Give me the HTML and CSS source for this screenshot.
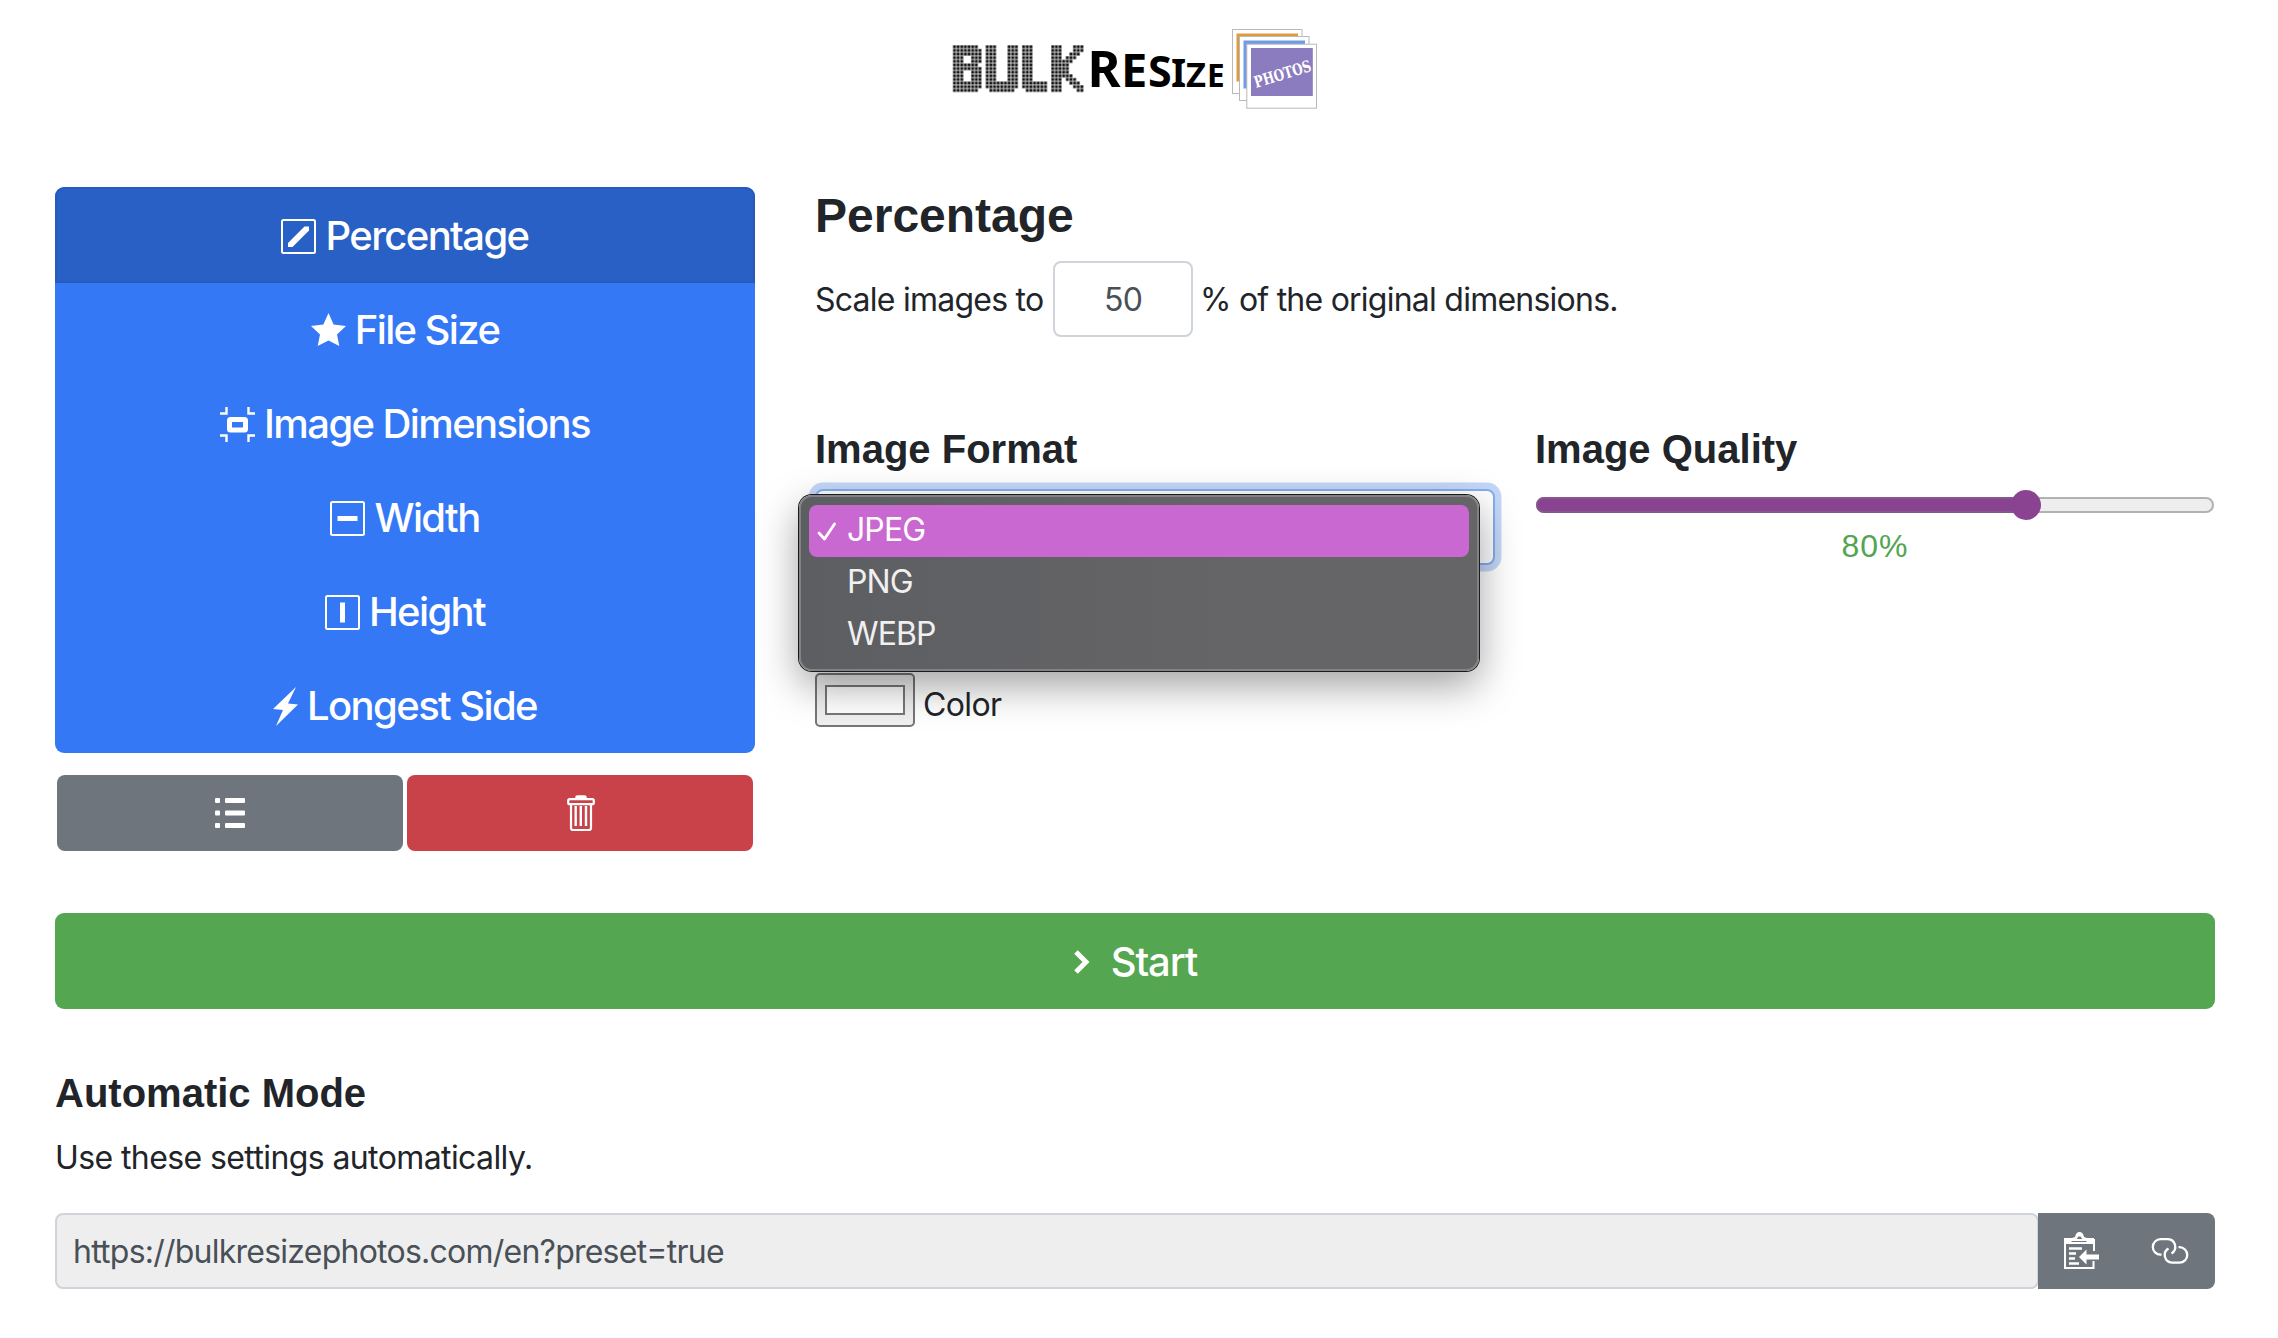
FILE: index.html
```html
<!DOCTYPE html>
<html lang="en">
<head>
<meta charset="utf-8">
<title>Bulk Resize Photos</title>
<link rel="stylesheet" href="styles.css">
</head>
<body>
<div class="container">
  <header class="header">
    <svg class="logo" width="368" height="84" viewBox="950 26 368 84" role="img" aria-label="Bulk Resize Photos">
      <defs>
        <pattern id="dots" width="1" height="1" patternUnits="userSpaceOnUse">
          <rect width="1" height="1" fill="#d2d2d2"/>
          <rect x=".12" y=".12" width=".74" height=".74" fill="#111"/>
        </pattern>
      </defs>
      <g transform="translate(952.700 45) scale(3.640 3.630)" fill="url(#dots)" fill-rule="evenodd">
        <path d="M0 0H7V1H8V5H7V6H8V12H7V13H0ZM3 3V5H5V3ZM3 7V10H5V7Z"/>
        <path d="M9 0H12V10H15V0H18V12H17V13H10V12H9Z"/>
        <path d="M19 0H22V10H26V13H20V12H19Z"/>
        <path d="M27 0H30V4H31V3H32V2H33V0H36V2H35V3H34V4H33V5H32V8H33V9H34V10H35V11H36V13H34V12H33V11H32V10H31V9H30V13H27Z"/>
      </g>
      <g class="logo-word">
        <text x="1087.500" y="87.300" font-size="50.500">R</text>
        <text x="1121" y="87.300" font-size="47">E</text>
        <text x="1148" y="87.300" font-size="43">S</text>
        <text x="1171" y="87.300" font-size="39">I</text>
        <text x="1186" y="87.300" font-size="34.500">Z</text>
        <text x="1207" y="87.300" font-size="31.500">E</text>
      </g>
      <g fill="#fff" stroke="#b9b9b9">
        <rect x="1232.500" y="29.500" width="69.500" height="64"/>
        <rect x="1236.500" y="33.500" width="61.500" height="48" fill="#e09b3d" stroke="none"/>
        <rect x="1239.500" y="36.500" width="69.500" height="64"/>
        <rect x="1243.500" y="40.500" width="61.500" height="48" fill="#6f9ce6" stroke="none"/>
        <rect x="1246.800" y="44.200" width="69.700" height="64"/>
        <rect x="1251" y="48" width="61.800" height="48" fill="#8b7cc0" stroke="none"/>
      </g>
      <text class="logo-photos" transform="translate(1256 88) rotate(-17)" textLength="59" lengthAdjust="spacingAndGlyphs">PHOTOS</text>
    </svg>
  </header>

  <main class="settings">
    <aside class="sidebar">
      <nav class="modes">
        <a class="mode active"><svg class="icon" viewBox="0 0 35 35"><rect x="1" y="1" width="33" height="33" rx="1.500" fill="none" stroke="currentColor" stroke-width="2"/><path d="M7 24 23.500 7.500H28V11.500L11.500 28H7Z"/></svg><span>Percentage</span></a>
        <a class="mode"><svg class="icon" viewBox="0 0 35 35"><path d="M17.500 0 22.600 11.500 35 13 26 21.500 28.300 33 17.500 27.500 6.700 33 9 21.500 0 13 12.400 11.500Z"/></svg><span>File Size</span></a>
        <a class="mode"><svg class="icon" viewBox="0 0 35 35"><path d="M0 6.500H6.500V0M28.500 0V6.500H35M35 28.500H28.500V35M6.500 35V28.500H0" fill="none" stroke="currentColor" stroke-width="2.400"/><rect x="9.500" y="12.500" width="16" height="10.500" rx="1" fill="none" stroke="currentColor" stroke-width="5"/></svg><span>Image Dimensions</span></a>
        <a class="mode"><svg class="icon" viewBox="0 0 35 35"><rect x="1" y="1" width="33" height="33" rx="1.500" fill="none" stroke="currentColor" stroke-width="2"/><path d="M7.500 15H27.500V20H7.500Z"/></svg><span>Width</span></a>
        <a class="mode"><svg class="icon" viewBox="0 0 35 35"><rect x="1" y="1" width="33" height="33" rx="1.500" fill="none" stroke="currentColor" stroke-width="2"/><path d="M15 7.500H20V27.500H15Z"/></svg><span>Height</span></a>
        <a class="mode"><svg class="icon bolt" viewBox="0 0 25 39"><path d="M23 0 0 22 10 23 3 39 25 17.500 15 16.500Z"/></svg><span>Longest Side</span></a>
      </nav>
      <div class="actions">
        <button class="btn gray" aria-label="List"><svg width="30" height="30" viewBox="0 0 30 30"><g fill="currentColor"><rect width="5" height="5" rx="1"/><rect x="10" width="20" height="5" rx="1"/><rect y="12.500" width="5" height="5" rx="1"/><rect x="10" y="12.500" width="20" height="5" rx="1"/><rect y="25" width="5" height="5" rx="1"/><rect x="10" y="25" width="20" height="5" rx="1"/></g></svg></button>
        <button class="btn red" aria-label="Delete"><svg width="28" height="36" viewBox="0 0 28 36" fill="none" stroke="currentColor"><path d="M9 3.500V2Q9 1 10.500 1H17.500Q19 1 19 2V3.500" fill="currentColor" stroke-width="1.500"/><rect x="1.200" y="4.200" width="25.600" height="5" rx="1.500" stroke-width="2.200"/><path d="M4 9V33Q4 35 6 35H22Q24 35 24 33V9" stroke-width="2.200"/><path d="M8.700 11V31M13.800 11V31M19 11V31" stroke-width="2.400"/></svg></button>
      </div>
    </aside>

    <section class="panel">
      <h1>Percentage</h1>
      <div class="scale">
        <span class="scale-before">Scale images to</span>
        <input class="field percent" value="50">
        <span class="scale-after">% of the original dimensions.</span>
      </div>
      <div class="columns">
        <div>
          <h2>Image Format</h2>
          <div class="select">
            <ul class="menu">
              <li class="selected"><svg class="check" viewBox="0 0 20 20"><path d="M2 11 7.500 17 17.500 2" fill="none" stroke="currentColor" stroke-width="2.800" stroke-linecap="round" stroke-linejoin="round"/></svg>JPEG</li>
              <li>PNG</li>
              <li>WEBP</li>
            </ul>
          </div>
          <div class="color"><span class="swatch"><span></span></span><label>Color</label></div>
        </div>
        <div>
          <h2>Image Quality</h2>
          <div class="slider"><div class="fill"></div><div class="thumb"></div></div>
          <div class="quality">80%</div>
        </div>
      </div>
    </section>
  </main>

  <button class="start"><svg width="18" height="24" viewBox="0 0 18 24"><path d="M3 2 13 12 3 22" fill="none" stroke="currentColor" stroke-width="5"/></svg><span>Start</span></button>

  <section class="automatic">
    <h2>Automatic Mode</h2>
    <p>Use these settings automatically.</p>
    <div class="url-row">
      <input class="field url" value="https://bulkresizephotos.com/en?preset=true" readonly>
      <div class="url-actions">
        <svg width="36" height="38" viewBox="0 0 36 38"><path d="M30 19V8H1V36H29.500V29" fill="none" stroke="currentColor" stroke-width="2"/><path d="M0 12V6H8L11 5Q12 0 15.500 0T20 5L23 6H30V12ZM7 10H23L21 8H19L16.500 4.500H14.500L12 8H9Z" fill="currentColor" fill-rule="evenodd"/><path d="M5 16.500H18M5 21.500H12M5 26.500H11M5 31.500H15" stroke="currentColor" stroke-width="2.600"/><path d="M15 25 22.500 17.500V22.500H35V27.500H22.500V32.500Z" fill="currentColor"/></svg>
        <svg width="38" height="26" viewBox="0 0 38 26" fill="none" stroke="currentColor" stroke-width="2.300"><path d="M10.500 16.600H9.500A7.700 7.700 0 0 1 9.500 1.200H17A7.700 7.700 0 0 1 20.500 15.500"/><path d="M27.500 9.200H28.500A7.700 7.700 0 0 1 28.500 24.700H21A7.700 7.700 0 0 1 17.500 10.400"/></svg>
      </div>
    </div>
  </section>
</div>
</body>
</html>
```
FILE: styles.css
```css
* { box-sizing: border-box; }

body {
  margin: 0;
  background: #fff;
  color: #212529;
  font: 32px/48px Inter, "Liberation Sans", sans-serif;
  letter-spacing: -0.76px;
}

.container { padding: 0 63px 0 55px; }

h1, h2, p, ul { margin: 0; }

h1, h2 {
  font-family: "Liberation Sans", Arial, sans-serif;
  font-weight: 700;
  letter-spacing: 0;
}
h1 { font-size: 48px; line-height: 58px; }
h2 { font-size: 40px; line-height: 48px; }

button { border: 0; color: #fff; font: inherit; }
button svg, .url-actions svg { display: block; }

/* header */
.header {
  height: 187px;
  padding-top: 26px;
}
.logo { display: block; margin-left: 895px; overflow: visible; }
.logo-word { font-family: "Noto Sans", sans-serif; font-weight: 700; fill: #000; letter-spacing: 0; }
.logo-photos { font: 700 16px "DejaVu Serif", serif; fill: #fff; letter-spacing: 0; }

/* resize modes */
.settings {
  display: grid;
  grid-template-columns: 700px 1400px;
  column-gap: 60px;
}
.modes {
  background: #3478f6;
  border-radius: 9px;
  overflow: hidden;
}
.mode {
  display: flex;
  align-items: center;
  justify-content: center;
  gap: 9px;
  height: 94px;
  color: #fff;
  font-size: 40px;
  font-weight: 450;
  letter-spacing: -1.6px;
}
.mode.active {
  height: 96px;
  padding-top: 2px;
  background: #2960c5;
  border: 2px solid #285bb8;
  border-radius: 9px 9px 0 0;
}
.icon { width: 35px; height: 35px; fill: currentColor; }
.icon.bolt { width: 25px; height: 39px; }

.actions {
  display: grid;
  grid-template-columns: 1fr 1fr;
  gap: 4px;
  padding: 22px 2px 0;
}
.btn {
  display: flex;
  align-items: center;
  justify-content: center;
  height: 76px;
  padding: 0;
  border-radius: 8px;
}
.gray { background: #6e757c; }
.red { padding-left: 2px; background: #ca4249; }

/* settings panel */
.scale {
  display: flex;
  align-items: center;
  margin-top: 16px;
}
.field {
  height: 76px;
  border: 2px solid #ced4da;
  border-radius: 8px;
  color: #495057;
  font: inherit;
  letter-spacing: inherit;
  outline: 0;
}
.scale span { padding-top: 2px; }
.scale-before { width: 238px; white-space: nowrap; }
.percent { width: 140px; padding: 0; text-align: center; }
.scale-after { margin-left: 7px; }

.columns {
  display: grid;
  grid-template-columns: 680px 680px;
  column-gap: 40px;
  margin-top: 88px;
}
.select {
  position: relative;
  height: 76px;
  margin-top: 16px;
  border: 2px solid #80b0ee;
  border-radius: 8px;
  background: #fff;
  box-shadow: 0 0 0 6.4px #c5d7f8;
}
.menu {
  position: absolute;
  z-index: 2;
  left: -18px;
  top: 4px;
  width: 680px;
  height: 176px;
  padding: 8px 8px 0;
  list-style: none;
  color: #f0f0f0;
  background: linear-gradient(90deg, #5d5e62, #656567 65%);
  border: 2px solid #828284;
  border-radius: 13px;
  box-shadow: 0 0 0 1px #1b1b1b, 0 14px 40px rgba(0, 0, 0, .38);
}
.menu li {
  position: relative;
  height: 52px;
  padding-left: 38px;
  line-height: 50px;
  letter-spacing: -0.9px;
}
.menu .selected {
  color: #fff;
  background: #ca68d1;
  border-radius: 8px;
}
.check { position: absolute; left: 8px; top: 17px; width: 20px; height: 20px; }

.color {
  display: flex;
  gap: 8px;
  margin-top: 108px;
}
.swatch {
  width: 100px;
  height: 54px;
  padding: 10px 8px;
  border: 2px solid #767676;
  border-radius: 5px;
  background: #efefef;
}
.swatch span {
  display: block;
  height: 30px;
  border: 2px solid #777;
  background: #fff;
}
.color label { padding-top: 8px; letter-spacing: -0.6px; }

.slider {
  position: relative;
  width: 678px;
  height: 16px;
  margin: 24px 1px 9px;
  border: 2px solid #b2b2b2;
  border-radius: 8px;
  background: #eee;
}
.fill {
  width: 490px;
  height: 16px;
  margin: -2px;
  border: 2px solid #83588a;
  border-radius: 8px 0 0 8px;
  background: #8a4391;
}
.thumb {
  position: absolute;
  left: 473px;
  top: -9px;
  width: 30px;
  height: 30px;
  border-radius: 50%;
  background: #8a4391;
}
.quality {
  color: #53a551;
  font-family: "Liberation Sans", Arial, sans-serif;
  letter-spacing: 1px;
  text-align: center;
}

/* start */
.start {
  display: flex;
  align-items: center;
  justify-content: center;
  gap: 20px;
  width: 100%;
  height: 96px;
  margin-top: 62px;
  padding: 2px 0 0;
  border-radius: 9px;
  background: #54a651;
  font-size: 40px;
  font-weight: 450;
  letter-spacing: -1.1px;
}

/* automatic mode */
.automatic { padding-top: 60px; }
.automatic p { margin: 17px 0 31px; letter-spacing: -0.6px; }
.url-row { display: flex; }
.url {
  width: 1984px;
  padding: 0 16px;
  background: #eee;
}
.url-actions {
  display: flex;
  align-items: center;
  justify-content: space-between;
  width: 177px;
  height: 76px;
  margin-left: -1px;
  padding: 0 26px;
  color: #fff;
  background: #6e757c;
  border-radius: 0 8px 8px 0;
}
```
